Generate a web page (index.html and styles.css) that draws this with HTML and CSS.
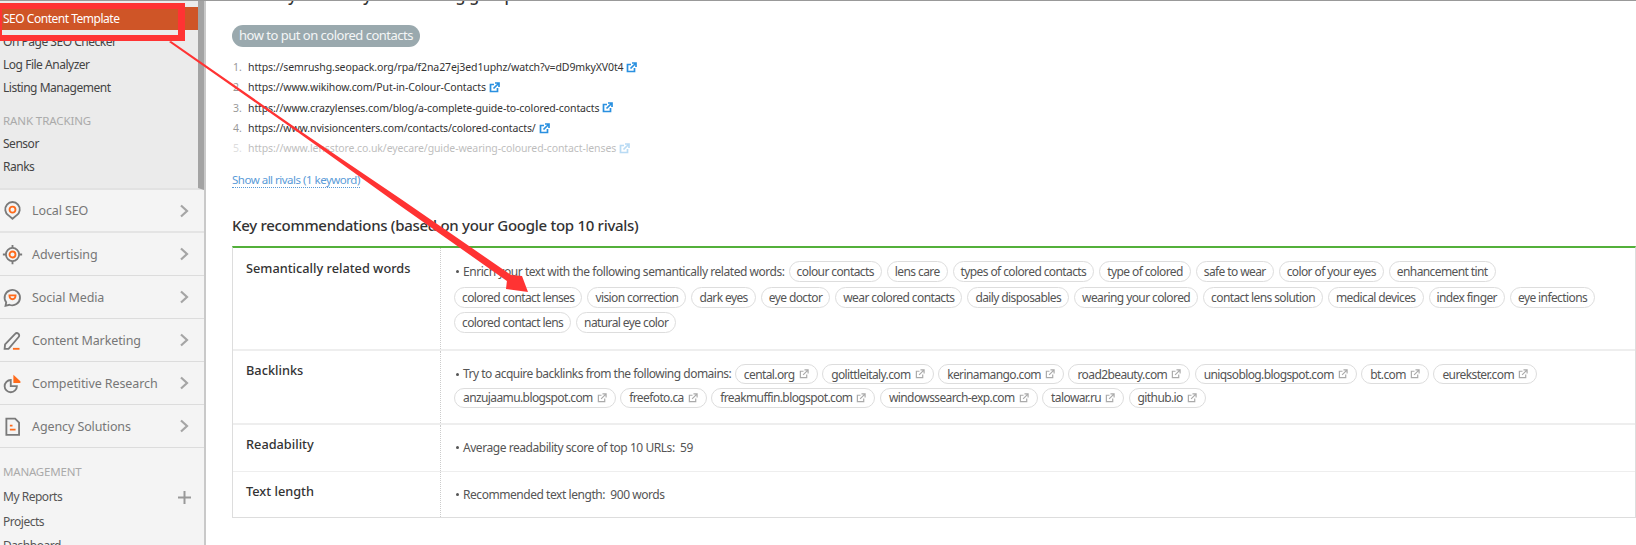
FILE: index.html
```html
<!DOCTYPE html>
<html lang="en">
<head>
<meta charset="utf-8">
<title>SEO Content Template</title>
<link rel="stylesheet" href="styles.css">
</head>
<body>
<div class="page">
  <aside class="sidebar">
    <div class="tools">
      <div class="tool active">SEO Content Template</div>
      <div class="tool">On Page SEO Checker</div>
      <div class="tool">Log File Analyzer</div>
      <div class="tool">Listing Management</div>
      <div class="tool-head">RANK TRACKING</div>
      <div class="tool">Sensor</div>
      <div class="tool">Ranks</div>
    </div>
    <nav class="menu">
      <div class="menu-item">
        <svg class="menu-icon" viewBox="0 0 24 24"><path class="g" d="M12 21.5 7.5 17.6A8.3 8.3 0 1 1 16.5 17.6Z"/><circle class="o" cx="12" cy="11" r="3.4"/></svg>
        <span class="menu-label">Local SEO</span>
        <svg class="chev" viewBox="0 0 10 14"><path d="M2 1.5 8 7 2 12.5"/></svg>
      </div>
      <div class="menu-item">
        <svg class="menu-icon" viewBox="0 0 24 24"><circle class="g" cx="12" cy="12" r="7.5"/><path class="g" d="M12 1v3.5M12 19.5V23M1 12h3.5M19.5 12H23"/><circle class="o" cx="12" cy="12" r="3.4"/></svg>
        <span class="menu-label">Advertising</span>
        <svg class="chev" viewBox="0 0 10 14"><path d="M2 1.5 8 7 2 12.5"/></svg>
      </div>
      <div class="menu-item">
        <svg class="menu-icon" viewBox="0 0 24 24"><path class="g" d="M4 21.5 4.800 17.500A8.800 8.800 0 1 1 8.500 20.300Z"/><path class="o" d="M8.500 9.500h7c0 2.800-1.300 4.500-3.500 4.500s-3.500-1.700-3.500-4.500Z"/></svg>
        <span class="menu-label">Social Media</span>
        <svg class="chev" viewBox="0 0 10 14"><path d="M2 1.500 8 7 2 12.500"/></svg>
      </div>
      <div class="menu-item">
        <svg class="menu-icon" viewBox="0 0 24 24"><path class="g" d="M3 21.500 3.500 16.500 15 4.500A2.500 2.500 0 0 1 19 8L7.500 21.500Z"/><path class="o" d="M12.500 21.500H20"/></svg>
        <span class="menu-label">Content Marketing</span>
        <svg class="chev" viewBox="0 0 10 14"><path d="M2 1.500 8 7 2 12.500"/></svg>
      </div>
      <div class="menu-item">
        <svg class="menu-icon" viewBox="0 0 24 24"><path class="g" d="M10 8A7 7 0 1 0 17 15H10Z"/><path class="of" d="M13 2 21 9.500 21 11.500H13Z"/></svg>
        <span class="menu-label">Competitive Research</span>
        <svg class="chev" viewBox="0 0 10 14"><path d="M2 1.500 8 7 2 12.500"/></svg>
      </div>
      <div class="menu-item">
        <svg class="menu-icon" viewBox="0 0 24 24"><path class="g" d="M5 3H15L19.500 7.500V21.500H5Z"/><path class="o" d="M9 11h3M9 15.500h6.500"/></svg>
        <span class="menu-label">Agency Solutions</span>
        <svg class="chev" viewBox="0 0 10 14"><path d="M2 1.500 8 7 2 12.500"/></svg>
      </div>
    </nav>
    <div class="manage">
      <div class="manage-head">MANAGEMENT</div>
      <div class="manage-row"><span>My Reports</span><svg class="plus" viewBox="0 0 13 13"><path d="M6.500 0v13M0 6.500h13"/></svg></div>
      <div class="manage-row"><span>Projects</span></div>
      <div class="manage-row"><span>Dashboard</span></div>
    </div>
  </aside>

  <main class="content">
    <div class="cut-heading">Rivals by relevancy and ranking groups</div>
    <div class="keyword">how to put on colored contacts</div>
    <ol class="rivals">
      <li><span class="num">1.</span><span class="url">https://semrushg.seopack.org/rpa/f2na27ej3ed1uphz/watch?v=dD9mkyXV0t4</span><svg class="ext-blue" viewBox="0 0 11 11"><path d="M8.500 6v3.500h-7v-7H5"/><path d="M4.500 6.500 9.500 1.500M6 1h4v4"/></svg></li>
      <li><span class="num">2.</span><span class="url">https://www.wikihow.com/Put-in-Colour-Contacts</span><svg class="ext-blue" viewBox="0 0 11 11"><path d="M8.500 6v3.500h-7v-7H5"/><path d="M4.500 6.500 9.500 1.500M6 1h4v4"/></svg></li>
      <li><span class="num">3.</span><span class="url">https://www.crazylenses.com/blog/a-complete-guide-to-colored-contacts</span><svg class="ext-blue" viewBox="0 0 11 11"><path d="M8.500 6v3.500h-7v-7H5"/><path d="M4.500 6.500 9.500 1.500M6 1h4v4"/></svg></li>
      <li><span class="num">4.</span><span class="url">https://www.nvisioncenters.com/contacts/colored-contacts/</span><svg class="ext-blue" viewBox="0 0 11 11"><path d="M8.500 6v3.500h-7v-7H5"/><path d="M4.500 6.500 9.500 1.500M6 1h4v4"/></svg></li>
      <li class="faded"><span class="num">5.</span><span class="url">https://www.lensstore.co.uk/eyecare/guide-wearing-coloured-contact-lenses</span><svg class="ext-blue" viewBox="0 0 11 11"><path d="M8.500 6v3.500h-7v-7H5"/><path d="M4.500 6.500 9.500 1.500M6 1h4v4"/></svg></li>
    </ol>
    <a class="show-all">Show all rivals (1 keyword)</a>
    <h2 class="key-title">Key recommendations (based on your Google top 10 rivals)</h2>
    <div class="table">
      <div class="row row-words">
        <div class="label">Semantically related words</div>
        <div class="cell">
          <div class="chips">
            <span class="lead">Enrich your text with the following semantically related words:</span>
            <span class="chip">colour contacts</span><span class="chip">lens care</span><span class="chip">types of colored contacts</span><span class="chip">type of colored</span><span class="chip">safe to wear</span><span class="chip">color of your eyes</span><span class="chip">enhancement tint</span>
          </div>
          <div class="chips">
            <span class="chip">colored contact lenses</span><span class="chip">vision correction</span><span class="chip">dark eyes</span><span class="chip">eye doctor</span><span class="chip">wear colored contacts</span><span class="chip">daily disposables</span><span class="chip">wearing your colored</span><span class="chip">contact lens solution</span><span class="chip">medical devices</span><span class="chip">index finger</span><span class="chip">eye infections</span>
          </div>
          <div class="chips">
            <span class="chip">colored contact lens</span><span class="chip">natural eye color</span>
          </div>
        </div>
      </div>
      <div class="row row-links">
        <div class="label">Backlinks</div>
        <div class="cell">
          <div class="chips">
            <span class="lead">Try to acquire backlinks from the following domains:</span>
            <span class="chip link">cental.org<svg class="ext" viewBox="0 0 11 11"><path d="M8.500 6v3.500h-7v-7H5"/><path d="M4.500 6.500 9.500 1.500M6 1h4v4"/></svg></span><span class="chip link">golittleitaly.com<svg class="ext" viewBox="0 0 11 11"><path d="M8.500 6v3.500h-7v-7H5"/><path d="M4.500 6.500 9.500 1.500M6 1h4v4"/></svg></span><span class="chip link">kerinamango.com<svg class="ext" viewBox="0 0 11 11"><path d="M8.500 6v3.500h-7v-7H5"/><path d="M4.500 6.500 9.500 1.500M6 1h4v4"/></svg></span><span class="chip link">road2beauty.com<svg class="ext" viewBox="0 0 11 11"><path d="M8.500 6v3.500h-7v-7H5"/><path d="M4.500 6.500 9.500 1.500M6 1h4v4"/></svg></span><span class="chip link">uniqsoblog.blogspot.com<svg class="ext" viewBox="0 0 11 11"><path d="M8.500 6v3.500h-7v-7H5"/><path d="M4.500 6.500 9.500 1.500M6 1h4v4"/></svg></span><span class="chip link">bt.com<svg class="ext" viewBox="0 0 11 11"><path d="M8.500 6v3.500h-7v-7H5"/><path d="M4.500 6.500 9.500 1.500M6 1h4v4"/></svg></span><span class="chip link">eurekster.com<svg class="ext" viewBox="0 0 11 11"><path d="M8.500 6v3.500h-7v-7H5"/><path d="M4.500 6.500 9.500 1.500M6 1h4v4"/></svg></span>
          </div>
          <div class="chips">
            <span class="chip link">anzujaamu.blogspot.com<svg class="ext" viewBox="0 0 11 11"><path d="M8.500 6v3.500h-7v-7H5"/><path d="M4.500 6.500 9.500 1.500M6 1h4v4"/></svg></span><span class="chip link">freefoto.ca<svg class="ext" viewBox="0 0 11 11"><path d="M8.500 6v3.500h-7v-7H5"/><path d="M4.500 6.500 9.500 1.500M6 1h4v4"/></svg></span><span class="chip link">freakmuffin.blogspot.com<svg class="ext" viewBox="0 0 11 11"><path d="M8.500 6v3.500h-7v-7H5"/><path d="M4.500 6.500 9.500 1.500M6 1h4v4"/></svg></span><span class="chip link">windowssearch-exp.com<svg class="ext" viewBox="0 0 11 11"><path d="M8.500 6v3.500h-7v-7H5"/><path d="M4.500 6.500 9.500 1.500M6 1h4v4"/></svg></span><span class="chip link">talowar.ru<svg class="ext" viewBox="0 0 11 11"><path d="M8.500 6v3.500h-7v-7H5"/><path d="M4.500 6.500 9.500 1.500M6 1h4v4"/></svg></span><span class="chip link">github.io<svg class="ext" viewBox="0 0 11 11"><path d="M8.500 6v3.500h-7v-7H5"/><path d="M4.500 6.500 9.500 1.500M6 1h4v4"/></svg></span>
          </div>
        </div>
      </div>
      <div class="row row-read">
        <div class="label">Readability</div>
        <div class="cell"><div class="chips"><span class="lead">Average readability score of top 10 URLs:&nbsp; 59</span></div></div>
      </div>
      <div class="row row-len">
        <div class="label">Text length</div>
        <div class="cell"><div class="chips"><span class="lead">Recommended text length:&nbsp; 900 words</span></div></div>
      </div>
    </div>
  </main>
</div>

<div class="red-box"></div>
<svg class="arrow" viewBox="0 0 1636 545" width="1636" height="545">
  <polygon points="171,41 169,42 299.300,133.200 398.400,204.400 506.900,281 506,289 528,292 522,276 511.100,275 401.600,199.600 300.700,131.200"/>
</svg>
</body>
</html>
```

FILE: styles.css
```css
* { box-sizing: border-box; }
html, body { margin: 0; height: 100%; }
body {
  width: 1636px;
  height: 545px;
  overflow: hidden;
  background: #fff;
  font-family: "Noto Sans", "Liberation Sans", sans-serif;
  color: #333;
  position: relative;
}
.page { display: flex; height: 545px; border-top: 1px solid #999; overflow: hidden; }

/* Sidebar */
.sidebar {
  width: 206px;
  flex: none;
  background: #f4f4f4;
  border-right: 2px solid #c9c9c9;
  overflow: hidden;
  display: flex;
  flex-direction: column;
  font-size: 12px;
}
.tools {
  height: 189px;
  padding: 6px 0 0;
  background: #ebebeb;
  border-right: 6px solid #a3a3a3;
  border-bottom: 2px solid #e2e2e2;
  flex: none;
}
.tool { height: 23px; line-height: 23px; padding-left: 3px; color: #444; white-space: nowrap; letter-spacing: -0.48px; }
.tool.active { background: #cf5527; color: #fff; }
.tool-head { margin-top: 10px; height: 23px; line-height: 23px; padding-left: 3px; font-size: 11.5px; color: #aaa; letter-spacing: -0.1px; }
.menu { flex: none; }
.menu-item {
  height: 43px;
  display: flex;
  align-items: center;
  border-bottom: 1px solid #dcdcdc;
  padding: 0 15px 0 2px;
  color: #777;
  font-size: 12.5px;
}
.menu-item:first-child { border-bottom: 2px solid #e4e4e4; }
.menu-icon { width: 21px; height: 21px; flex: none; fill: none; stroke-width: 2.1; }
.menu-icon .g { stroke: #7a7a7a; }
.menu-icon .o { stroke: #ff6a1a; }
.menu-icon .of { fill: #ff6a1a; stroke: none; }
.menu-label { margin-left: 9px; flex: 1; white-space: nowrap; letter-spacing: -0.1px; }
.chev { width: 10px; height: 14px; fill: none; stroke: #a5a5a5; stroke-width: 2.2; }
.manage { padding: 13px 13px 0 3px; }
.manage-head { font-size: 11.5px; color: #aaa; height: 24px; line-height: 22px; letter-spacing: -0.2px; }
.manage-row { height: 24.5px; line-height: 24px; color: #555; display: flex; justify-content: space-between; align-items: center; letter-spacing: -0.48px; }
.plus { width: 13px; height: 13px; fill: none; stroke: #999; stroke-width: 2; }

/* Content */
.content { flex: 1; min-width: 0; padding-left: 26px; }
.cut-heading { height: 26px; margin-top: -15px; font-size: 16px; line-height: 18px; font-weight: 500; color: #333; letter-spacing: -0.2px; white-space: nowrap; }
.keyword {
  display: inline-block;
  height: 22px;
  line-height: 21px;
  padding: 0 7px;
  margin-top: 13px;
  border-radius: 11px;
  background: #9aa9ae;
  color: #f4f6f6;
  font-size: 13px;
  letter-spacing: -0.5px;
  white-space: nowrap;
}
.rivals { list-style: none; margin: 10px 0 0; padding: 0; position: relative; height: 101px; }
.rivals li { height: 20.3px; line-height: 20px; font-size: 10.5px; display: flex; align-items: center; color: #333; white-space: nowrap; }
.rivals .faded { opacity: .32; }
.num { width: 16px; padding-left: 1px; color: #999; }
.url { color: #333; letter-spacing: -0.11px; }
.ext-blue { width: 11px; height: 11px; margin-left: 3px; fill: none; stroke: #2a90e0; stroke-width: 1.7; }
.show-all {
  display: inline-block;
  margin-top: 15px;
  font-size: 11.5px;
  line-height: 14px;
  color: #5a9bd8;
  border-bottom: 1px dotted #5a9bd8;
  letter-spacing: -0.5px;
}
.key-title { margin: 26px 0 0; font-size: 15px; line-height: 20px; font-weight: 500; color: #333; letter-spacing: -0.29px; white-space: nowrap; }
.table {
  margin-top: 11px;
  border-top: 2px solid #53b03a;
  border-left: 1px solid #ddd;
  border-right: 1px solid #ddd;
  border-bottom: 1px solid #ddd;
  width: 1404px;
}
.row { display: flex; border-bottom: 2px solid #eee; }
.row:last-child { border-bottom: 0; }
.row-words { height: 103px; }
.row-links { height: 74px; }
.row-read { height: 47px; border-bottom-width: 1px; }
.row-len { height: 45px; }
.label {
  width: 208px;
  flex: none;
  padding: 11px 0 0 13px;
  font-size: 12.75px;
  line-height: 17px;
  font-weight: 500;
  border-right: 1px dotted #ccc;
  color: #333;
}
.row-words .label { padding-top: 12px; }
.cell { flex: 1; padding: 13px 0 0 13px; font-size: 12px; color: #555; }
.chips { display: flex; gap: 5px; margin-bottom: 4.5px; align-items: center; white-space: nowrap; }
.row-links .cell { padding-top: 13px; }
.row-links .chips { margin-bottom: 3.5px; gap: 4.5px; }
.row-links .lead { line-height: 20px; letter-spacing: -0.5px; }
.row-read .cell, .row-len .cell { padding-top: 12px; }
.lead { position: relative; padding-left: 9px; line-height: 21px; margin-right: -1px; letter-spacing: -0.45px; }
.lead::before {
  content: "";
  position: absolute;
  left: 2px;
  top: 9px;
  width: 3px;
  height: 3px;
  border-radius: 50%;
  background: #555;
}
.chip {
  display: inline-flex;
  align-items: center;
  height: 21px;
  padding: 0 7px;
  border: 1px solid #ddd;
  border-radius: 11px;
  color: #555;
  background: #fff;
  letter-spacing: -0.6px;
}
.chip.link { height: 20px; padding: 0 8px; letter-spacing: -0.6px; }
.ext { width: 10px; height: 10px; margin-left: 4px; fill: none; stroke: #aaa; stroke-width: 1.3; }

/* Annotations drawn over the screenshot */
.red-box {
  position: absolute;
  left: 0;
  top: 3px;
  width: 185px;
  height: 38px;
  border: 6px solid #ff3333;
  border-left-width: 2px;
  border-right-width: 7px;
}
.arrow { position: absolute; left: 0; top: 0; pointer-events: none; }
.arrow polygon { fill: #ff3333; }
```
